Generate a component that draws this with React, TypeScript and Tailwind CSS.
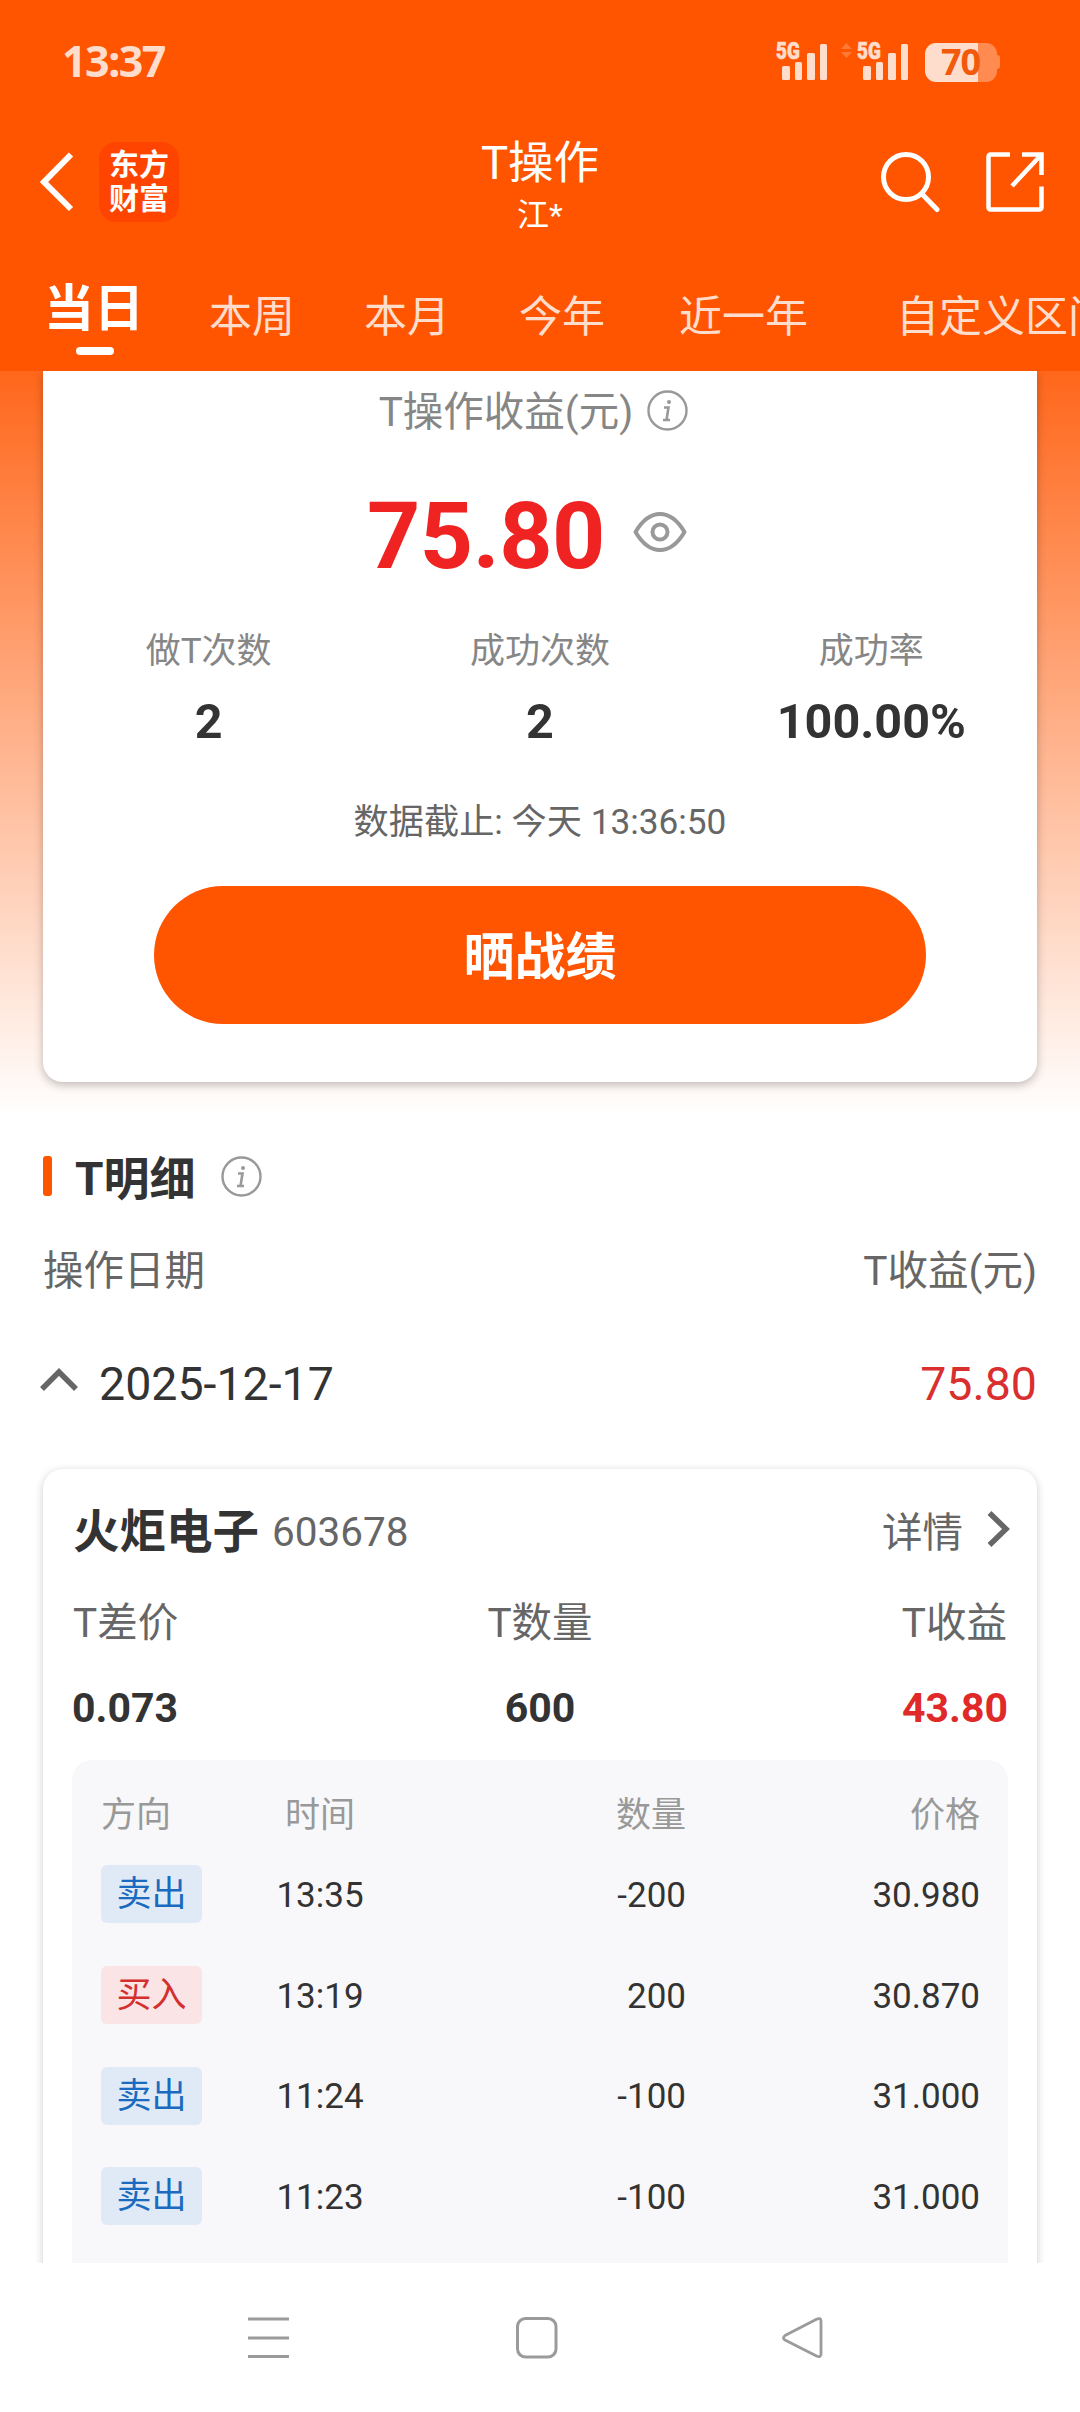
import React from 'react';

const tabs = [
  { name: '本周', className: 'ml-[65px]' },
  { name: '本月', className: 'ml-[69px]' },
  { name: '今年', className: 'ml-[69px]' },
  { name: '近一年', className: 'ml-[74px]' },
  { name: '自定义区间', className: 'ml-[88px]' },
];

const stats = [
  { label: '做T次数', value: '2' },
  { label: '成功次数', value: '2' },
  { label: '成功率', value: '100.00%' },
];

const trades = [
  { side: 'sell', time: '13:35', amount: '-200', price: '30.980' },
  { side: 'buy', time: '13:19', amount: '200', price: '30.870' },
  { side: 'sell', time: '11:24', amount: '-100', price: '31.000' },
  { side: 'sell', time: '11:23', amount: '-100', price: '31.000' },
];

function Signal() {
  return (
    <div className="relative h-[38px] w-[52px]">
      <span className="absolute left-0 top-0 origin-left scale-x-[0.82] font-['Roboto'] text-[23px] font-black leading-[18px] [-webkit-text-stroke:0.6px_#ffddcc]">5G</span>
      <svg className="absolute left-0 top-0" width="52" height="38" fill="currentColor">
        <rect x="6" y="23" width="8" height="14" rx="1.5" />
        <rect x="19" y="19" width="7" height="18" rx="1.5" />
        <rect x="31" y="10" width="8" height="27" rx="1.5" />
        <rect x="44" y="1" width="7" height="36" rx="1.5" />
      </svg>
    </div>
  );
}

function StatusBar() {
  return (
    <div className="flex h-[124px] items-center pl-[62px] pr-[80px] text-[#ffddcc]">
      <span className="-mt-[3px] font-['Noto_Sans'] text-[43px] font-bold leading-none tracking-[-1.5px]">13:37</span>
      <div className="ml-auto flex items-center">
        <Signal />
        <svg className="ml-[13px] mr-[5px] -mt-[22px]" width="11" height="16" fill="#ff7a35">
          <path d="M5.5 0L11 6H0zM0 9h11l-5.500 6z" />
        </svg>
        <Signal />
        <div className="relative ml-[16px] flex h-[39px] w-[72px] items-center justify-center rounded-[11px] bg-[linear-gradient(to_right,#ffddcc_53px,#ff8b50_53px)]">
          <span className="-mt-[1px] mr-[1px] font-['Noto_Sans'] text-[36px] font-bold leading-[39px] tracking-[-1px] text-[#f15a0c]">70</span>
        </div>
        <div className="h-[14px] w-[3px] rounded-r-[3px] bg-[#ff8b50]" />
      </div>
    </div>
  );
}

function InfoIcon() {
  return (
    <svg width="41" height="41" viewBox="0 0 41 41" fill="none" stroke="#999999">
      <circle cx="20.500" cy="20.500" r="19" strokeWidth="2.400" />
      <circle cx="22" cy="12" r="2" fill="#999999" stroke="none" />
      <path d="M17 17.500h4.500l-2 12.500M16 30h7" strokeWidth="2.600" />
    </svg>
  );
}

function Header() {
  return (
    <header className="h-[371px] overflow-hidden bg-[#ff5500] text-white">
      <StatusBar />
      <div className="flex h-[116px] items-center pl-[40px] pr-[36px]">
        <div className="flex w-[300px] items-center">
          <svg width="34" height="60" viewBox="0 0 34 60" fill="none" stroke="currentColor" strokeWidth="6">
            <path d="M31 2.500L4 30L31 57" />
          </svg>
          <div className="ml-[25px] flex h-[80px] w-[80px] flex-col items-center justify-center rounded-[17px] bg-[#ff4400] text-[30px] font-bold leading-[34px]">
            <span>东方</span>
            <span>财富</span>
          </div>
        </div>
        <div className="flex flex-1 flex-col items-center pr-[4px] pt-[11px]">
          <h1 className="text-[45.500px] leading-[54px]">T操作</h1>
          <p className="text-[32px] leading-[48px]">江*</p>
        </div>
        <div className="flex w-[300px] items-center justify-end">
          <svg width="60" height="62" viewBox="0 0 60 62" fill="none" stroke="currentColor" strokeWidth="5">
            <circle cx="26" cy="26" r="22.500" />
            <path d="M42 43L57 58.500" strokeLinecap="round" />
          </svg>
          <svg className="ml-[46px]" width="58" height="60" viewBox="0 0 58 60" fill="none" stroke="currentColor" strokeWidth="4.500">
            <path d="M24 2.500H4.500a2 2 0 0 0-2 2V55.500a2 2 0 0 0 2 2H53.500a2 2 0 0 0 2-2V34.500M36 2.500H55.500V23M55 3L26 34" />
          </svg>
        </div>
      </div>
      <nav className="flex h-[131px] pl-[44px]">
        <div className="flex flex-col items-center pt-[39px]">
          <span className="whitespace-nowrap text-[50px] font-bold leading-[60px]">当日</span>
          <div className="mt-[8px] h-[8px] w-[38px] translate-x-[1px] rounded-full bg-white" />
        </div>
        {tabs.map((t) => (
          <span key={t.name} className={`${t.className} shrink-0 pt-[49px] text-[43px] leading-[56px] text-[#ffddcc]`}>{t.name}</span>
        ))}
      </nav>
    </header>
  );
}

function SummaryCard() {
  return (
    <section className="mx-[43px] h-[711px] rounded-b-[20px] bg-white shadow-[0_3px_10px_rgba(0,0,0,0.25)]">
      <div className="flex h-[82px] items-center justify-center gap-[14px] pr-[13px] text-[40.500px] text-[#868686]">
        <span className="pt-[1px]">T操作收益(元)</span>
        <div className="-mt-[3px]">
          <InfoIcon />
        </div>
      </div>
      <div className="flex h-[164px] items-center pl-[324px]">
        <span className="pt-[2px] text-[93px] font-bold leading-none tracking-[-0.5px] text-[#f02323]">75.80</span>
        <svg className="-mt-[7px] ml-[28px]" width="54" height="42" viewBox="0 0 54 42" fill="none" stroke="#999999" strokeWidth="4">
          <path d="M2.500 21C9 10 17 3 27 3S45 10 51.500 21C45 32 37 39 27 39S9 32 2.500 21Z" strokeLinejoin="round" />
          <circle cx="27" cy="21" r="7.500" />
        </svg>
      </div>
      <div className="grid grid-cols-3 pt-[3px] text-center">
        {stats.map((s) => (
          <div key={s.label}>
            <div className="h-[64px] text-[35px] leading-[64px] text-[#868686]">{s.label}</div>
            <div className="h-[76px] text-[48.500px] font-bold leading-[76px] text-[#333333]">{s.value}</div>
          </div>
        ))}
      </div>
      <p className="mt-[32px] h-[60px] text-center text-[35.200px] leading-[60px] text-[#666666]">数据截止: 今天 13:36:50</p>
      <button className="mx-auto mt-[34px] flex h-[138px] w-[772px] items-center justify-center rounded-full bg-[#ff5500] pt-[6px] text-[51px] font-bold text-white">
        晒战绩
      </button>
    </section>
  );
}

function TradeTable() {
  return (
    <div className="mx-[29px] h-[520px] rounded-t-[20px] bg-[#f8f8fa] px-[29px] pt-[28px] text-[35px] text-[#333333]">
      <div className="grid h-[56px] grid-cols-[101px_236px_248px_294px] items-center text-[#999999]">
        <span>方向</span>
        <span className="text-center">时间</span>
        <span className="text-right">数量</span>
        <span className="text-right">价格</span>
      </div>
      {trades.map((t) => (
        <div key={t.time} className="grid h-[100.700px] grid-cols-[101px_236px_248px_294px] items-center">
          {t.side === 'sell' ? (
            <span className="h-[58px] rounded-[6px] bg-[#dfeaf6] text-center leading-[60px] text-[#1a6bbf]">卖出</span>
          ) : (
            <span className="h-[58px] rounded-[6px] bg-[#fae4e5] text-center leading-[60px] text-[#d32f2f]">买入</span>
          )}
          <span className="pt-[4px] text-center">{t.time}</span>
          <span className="pt-[4px] text-right">{t.amount}</span>
          <span className="pt-[4px] text-right">{t.price}</span>
        </div>
      ))}
    </div>
  );
}

function StockCard() {
  return (
    <section className="mx-[43px] mt-[35px] h-[840px] rounded-[20px] bg-white shadow-[0_2px_9px_rgba(0,0,0,0.2)]">
      <div className="flex h-[124px] items-center pl-[30px] pr-[26px] text-[40.500px] text-[#666666]">
        <div className="flex items-baseline gap-[13px]">
          <h3 className="translate-y-[2px] text-[46.500px] font-bold text-[#333333]">火炬电子</h3>
          <span>603678</span>
        </div>
        <span className="ml-auto pt-[4px]">详情</span>
        <svg className="-mt-[4px] ml-[24px]" width="24" height="36" viewBox="0 0 24 36" fill="none" stroke="#666666" strokeWidth="5.500">
          <path d="M2.500 2L19 18L2.500 34" />
        </svg>
      </div>
      <div className="grid h-[46px] grid-cols-3 items-center px-[30px] text-[40.500px] text-[#666666]">
        <span>T差价</span>
        <span className="text-center">T数量</span>
        <span className="text-right">T收益</span>
      </div>
      <div className="grid h-[121px] grid-cols-3 items-center px-[29px] pt-[18px] text-[41px] font-bold text-[#333333]">
        <span>0.073</span>
        <span className="text-center">600</span>
        <span className="text-right text-[#e02a2a]">43.80</span>
      </div>
      <TradeTable />
    </section>
  );
}

function Detail() {
  return (
    <div className="pt-[60px]">
      <div className="flex h-[68px] items-center px-[43px]">
        <div className="h-[40px] w-[9px] rounded-[3px] bg-[#ff5500]" />
        <h2 className="ml-[23px] mr-[25px] pt-[6px] text-[46px] font-bold leading-none text-[#333333]">T明细</h2>
        <InfoIcon />
      </div>
      <div className="flex h-[120px] items-center justify-between px-[43px] pt-[2px] text-[40.500px] text-[#666666]">
        <span>操作日期</span>
        <span>T收益(元)</span>
      </div>
      <div className="flex h-[104px] items-center pl-[40px] pr-[43px] text-[46.500px] text-[#333333]">
        <svg className="-mt-[4px]" width="38" height="24" viewBox="0 0 38 24" fill="none" stroke="#666666" strokeWidth="5.500">
          <path d="M2 21L19 4L36 21" />
        </svg>
        <span className="ml-[21px] pt-[6px]">2025-12-17</span>
        <span className="ml-auto pt-[6px] text-[#d92f2f]">75.80</span>
      </div>
      <StockCard />
    </div>
  );
}

function NavBar() {
  return (
    <footer className="flex h-[149px] items-center bg-white pl-[248px]">
      <svg width="41" height="42" viewBox="0 0 41 42" stroke="#9b9b9b" strokeWidth="3">
        <path d="M0 2h41M0 21h41M0 39.500h41" />
      </svg>
      <svg className="ml-[227px]" width="42" height="42" viewBox="0 0 42 42" fill="none" stroke="#9b9b9b" strokeWidth="3">
        <rect x="1.500" y="1.500" width="38.500" height="38.500" rx="8" />
      </svg>
      <svg className="ml-[224px]" width="42" height="42" viewBox="0 0 42 42" fill="none" stroke="#9b9b9b" strokeWidth="2.800" strokeLinejoin="round">
        <path d="M3 18.500L34 2.500Q39 0 39 4V37Q39 41 34.500 39L3 23Q0 21 3 18.500Z" />
      </svg>
    </footer>
  );
}

export default function App() {
  return (
    <div className="h-[2412px] w-[1080px] overflow-hidden bg-white font-['Roboto','Noto_Sans_CJK_SC',sans-serif]">
      <Header />
      <main className="h-[1892px] overflow-hidden bg-[linear-gradient(to_bottom,#ff671b_0px,#ffffff_745px)]">
        <SummaryCard />
        <Detail />
      </main>
      <NavBar />
    </div>
  );
}
